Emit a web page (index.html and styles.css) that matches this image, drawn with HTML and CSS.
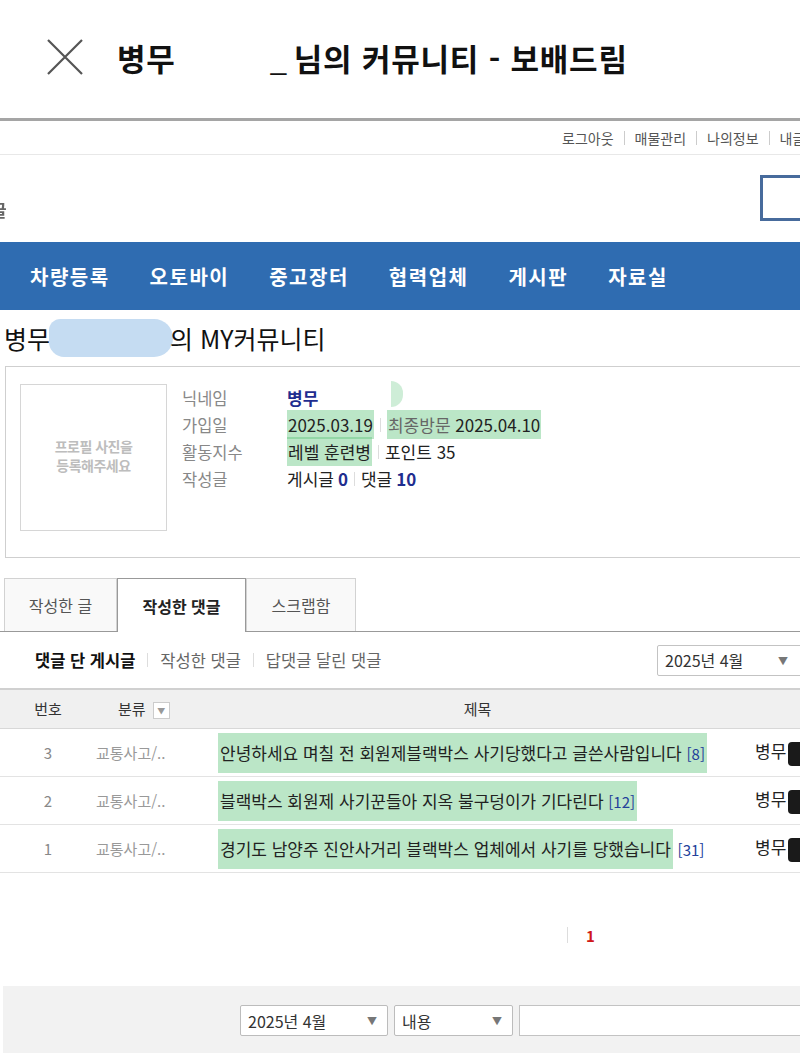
FILE: index.html
```html
<!DOCTYPE html>
<html lang="ko">
<head>
    <meta charset="UTF-8">
    <meta name="viewport" content="width=device-width, initial-scale=1.0">
    <title>병무님의 커뮤니티 - 보배드림</title>
    <link rel="stylesheet" href="styles.css">
</head>
<body>
    <!-- 앱 상단바 -->
    <header class="appbar">
        <svg class="close-icon" width="38" height="38" viewBox="0 0 38 38">
            <path d="M2 2 L36 36 M36 2 L2 36" stroke="#555" stroke-width="2.2" fill="none"/>
        </svg>
        <div class="appbar-title">
            <span>병무</span><span class="hidden-name"></span><span class="dash">_</span><span>님의 커뮤니티 - 보배드림</span>
        </div>
    </header>

    <div class="page">
        <!-- 상단 링크 -->
        <div class="toplinks">
            <a href="#">로그아웃</a>
            <a href="#">매물관리</a>
            <a href="#">나의정보</a>
            <a href="#">내글</a>
        </div>

        <div class="logo-row">
            <span class="cut-glyph">글</span>
            <div class="search-box"></div>
        </div>

        <!-- 메뉴 -->
        <nav class="gnb">
            <a href="#">차량등록</a>
            <a href="#">오토바이</a>
            <a href="#">중고장터</a>
            <a href="#">협력업체</a>
            <a href="#">게시판</a>
            <a href="#">자료실</a>
        </nav>

        <h2 class="my-title">병무<span class="blur-name"></span>의 MY커뮤니티</h2>

        <!-- 프로필 -->
        <section class="profile">
            <div class="photo">프로필 사진을<br>등록해주세요</div>
            <dl class="info">
                <dt>닉네임</dt>
                <dd><b class="nick">병무</b><span class="half-mark"></span></dd>
                <dt>가입일</dt>
                <dd><span class="mark">2025.03.19</span><i class="sep"></i><span class="mark"><span class="muted">최종방문</span> 2025.04.10</span></dd>
                <dt>활동지수</dt>
                <dd><span class="mark">레벨 훈련병</span><i class="sep"></i>포인트 35</dd>
                <dt>작성글</dt>
                <dd>게시글 <b class="num">0</b><i class="sep"></i>댓글 <b class="num">10</b></dd>
            </dl>
        </section>

        <!-- 탭 -->
        <div class="tabs">
            <a href="#" class="tab">작성한 글</a>
            <a href="#" class="tab active">작성한 댓글</a>
            <a href="#" class="tab">스크랩함</a>
        </div>

        <div class="subtabs">
            <div class="sub-links">
                <a href="#" class="on">댓글 단 게시글</a>
                <a href="#">작성한 댓글</a>
                <a href="#">답댓글 달린 댓글</a>
            </div>
            <div class="select month-select">2025년 4월<span class="arrow">▼</span></div>
        </div>

        <!-- 목록 -->
        <table class="list">
            <thead>
                <tr>
                    <th class="c-num">번호</th>
                    <th class="c-cat">분류 <span class="mini-select">▼</span></th>
                    <th class="c-title">제목</th>
                    <th class="c-writer"></th>
                </tr>
            </thead>
            <tbody>
                <tr>
                    <td class="c-num">3</td>
                    <td class="c-cat">교통사고/..</td>
                    <td class="c-title"><span class="mark row-mark">안녕하세요 며칠 전 회원제블랙박스 사기당했다고 글쓴사람입니다 <em>[8]</em></span></td>
                    <td class="c-writer">병무<span class="blot"></span></td>
                </tr>
                <tr>
                    <td class="c-num">2</td>
                    <td class="c-cat">교통사고/..</td>
                    <td class="c-title"><span class="mark row-mark">블랙박스 회원제 사기꾼들아 지옥 불구덩이가 기다린다 <em>[12]</em></span></td>
                    <td class="c-writer">병무<span class="blot"></span></td>
                </tr>
                <tr>
                    <td class="c-num">1</td>
                    <td class="c-cat">교통사고/..</td>
                    <td class="c-title"><span class="mark row-mark">경기도 남양주 진안사거리 블랙박스 업체에서 사기를 당했습니다</span> <em>[31]</em></td>
                    <td class="c-writer">병무<span class="blot"></span></td>
                </tr>
            </tbody>
        </table>

        <div class="paging"><i class="sep"></i><b>1</b></div>

        <!-- 검색 -->
        <div class="search-bar">
            <div class="select month-select small">2025년 4월<span class="arrow">▼</span></div>
            <div class="select type-select">내용<span class="arrow">▼</span></div>
            <div class="search-input"></div>
        </div>
    </div>
</body>
</html>
```

FILE: styles.css
```css
* {
    margin: 0;
    padding: 0;
    box-sizing: border-box;
}

body {
    width: 800px;
    height: 1053px;
    overflow: hidden;
    background: #fff;
    font-family: "Noto Sans CJK KR", "Noto Sans", sans-serif;
    color: #222;
}

a {
    color: inherit;
    text-decoration: none;
}

/* 앱 상단바 */
.appbar {
    height: 121px;
    display: flex;
    align-items: center;
    padding-left: 46px;
    padding-bottom: 4px;
    border-bottom: 3px solid #a5a5a5;
}

.close-icon {
    margin-right: 33px;
}

.appbar-title {
    display: flex;
    align-items: baseline;
    font-size: 31px;
    font-weight: bold;
    color: #111;
    letter-spacing: 0.8px;
}

.hidden-name {
    display: inline-block;
    width: 94px;
}

.dash {
    font-weight: normal;
    margin-right: 6px;
}

/* 페이지 */
.page {
    width: 830px;
}

.toplinks {
    display: flex;
    align-items: center;
    height: 34px;
    padding-left: 552px;
    border-bottom: 1px solid #e8e8e8;
    font-size: 14px;
    color: #555;
    white-space: nowrap;
}

.toplinks a {
    padding: 0 10px;
    line-height: 14px;
    border-left: 1px solid #ccc;
}

.toplinks a:first-child {
    border-left: none;
}

.logo-row {
    height: 87px;
    display: flex;
    align-items: center;
    justify-content: space-between;
}

.cut-glyph {
    margin-left: -9px;
    margin-top: 22px;
    font-size: 17px;
    font-weight: bold;
    color: #666;
    filter: blur(0.6px);
}

.search-box {
    width: 70px;
    height: 46px;
    border: 3px solid #476b9c;
    margin-top: -2px;
}

.gnb {
    height: 68px;
    background: #2f6cb1;
    display: flex;
    align-items: center;
    padding-left: 30px;
}

.gnb a {
    color: #fff;
    font-size: 20px;
    font-weight: bold;
    letter-spacing: 1.5px;
    margin-right: 40px;
}

.my-title {
    height: 56px;
    display: flex;
    align-items: center;
    padding-left: 4px;
    font-size: 25px;
    font-weight: normal;
    color: #111;
}

.blur-name {
    display: inline-block;
    width: 124px;
    height: 38px;
    margin: 0 -3px 0 -1px;
    background: #c5dcf2;
    border-radius: 12px 20px 20px 16px;
}

/* 프로필 */
.profile {
    margin-left: 5px;
    height: 192px;
    border: 1px solid #cfcfcf;
    display: flex;
    padding: 17px 0 0 14px;
}

.photo {
    width: 147px;
    height: 147px;
    border: 1px solid #d6d6d6;
    display: flex;
    align-items: center;
    justify-content: center;
    text-align: center;
    font-size: 14px;
    font-weight: bold;
    line-height: 19px;
    color: #bdbdbd;
    letter-spacing: -0.5px;
    padding-bottom: 4px;
}

.info {
    display: grid;
    grid-template-columns: 105px auto;
    grid-auto-rows: 27px;
    padding: 0 0 0 15px;
    font-size: 16px;
    align-items: center;
}

.info dt {
    color: #888;
    font-size: 16.5px;
}

.info dd {
    color: #222;
    display: flex;
    align-items: center;
    font-size: 17px;
}

.nick {
    color: #1f2d8f;
}

.num {
    color: #1f2d8f;
    margin-left: 4px;
}

.muted {
    color: #666;
}

.sep {
    display: inline-block;
    width: 1px;
    height: 14px;
    background: #ddd;
    margin: 0 6px;
}

.mark {
    background: rgba(92, 196, 122, 0.42);
    padding: 2px 1px;
}

.half-mark {
    display: inline-block;
    width: 12px;
    height: 26px;
    margin-left: 73px;
    margin-top: -8px;
    border-radius: 0 13px 13px 0;
    background: rgba(92, 196, 122, 0.3);
}

/* 탭 */
.tabs {
    display: flex;
    margin-top: 20px;
    padding-left: 4px;
    border-bottom: 1px solid #999;
    height: 54px;
}

.tab {
    width: 113px;
    display: flex;
    align-items: center;
    justify-content: center;
    font-size: 16px;
    color: #555;
    background: #f9f9f9;
    border: 1px solid #d2d2d2;
    border-bottom: none;
}

.tab.active {
    width: 129px;
    background: #fff;
    color: #222;
    font-weight: bold;
    border-color: #999;
    margin-bottom: -1px;
    border-left: 1px solid #999;
}

.tab:last-child {
    width: 110px;
}

/* 서브탭 */
.subtabs {
    display: flex;
    align-items: center;
    justify-content: space-between;
    height: 56px;
    padding: 0 0 0 35px;
}

.sub-links {
    display: flex;
    align-items: center;
    font-size: 16.5px;
    color: #666;
}

.sub-links a {
    padding: 0 12px;
    border-left: 1px solid #ddd;
    line-height: 14px;
}

.sub-links a:first-child {
    border-left: none;
    padding-left: 0;
}

.sub-links .on {
    color: #111;
    font-weight: bold;
}

.select {
    display: flex;
    align-items: center;
    justify-content: space-between;
    height: 31px;
    border: 1px solid #c3c3c3;
    border-radius: 2px;
    background: #fff;
    font-size: 16px;
    color: #333;
    padding: 0 10px 0 7px;
}

.arrow {
    font-size: 10px;
    color: #777;
}

.month-select {
    width: 160px;
    margin-right: 13px;
    padding-right: 28px;
}

/* 목록 */
.list {
    width: 830px;
    border-collapse: collapse;
    font-size: 15px;
}

.list th {
    height: 39px;
    background: #f0f0f0;
    border-top: 2px solid #d0d0d0;
    border-bottom: 1px solid #d8d8d8;
    font-weight: normal;
    color: #333;
}

.list td {
    height: 48px;
    border-bottom: 1px solid #e3e3e3;
}

.c-num {
    width: 96px;
    text-align: center;
    color: #777;
}

.list td.c-num {
    color: #888;
}

.c-cat {
    width: 104px;
    text-align: left;
}

.list th.c-cat {
    padding-left: 22px;
}

.list td.c-cat {
    color: #999;
    font-size: 15px;
}

.mini-select {
    display: inline-block;
    width: 17px;
    height: 17px;
    border: 1px solid #ccc;
    background: #fff;
    font-size: 8px;
    color: #999;
    text-align: center;
    line-height: 15px;
    vertical-align: middle;
    margin-left: 3px;
}

.c-title {
    text-align: center;
}

.list td.c-title {
    text-align: left;
    padding-left: 18px;
    color: #222;
    font-size: 17px;
    white-space: nowrap;
}

.row-mark {
    padding: 7px 2px 8px 2px;
}

.c-title em {
    font-style: normal;
    color: #23409a;
    font-size: 15px;
}

.c-writer {
    width: 75px;
    text-align: left;
}

.list td.c-writer {
    font-size: 17px;
    color: #222;
    white-space: nowrap;
}

.blot {
    display: inline-block;
    width: 14px;
    height: 24px;
    background: #1a1a1a;
    border-radius: 4px 0 0 4px;
    vertical-align: middle;
    margin-left: 2px;
}

.paging {
    height: 113px;
    display: flex;
    align-items: center;
    justify-content: center;
    padding-left: 326px;
    padding-top: 12px;
}

.paging b {
    color: #d01818;
    font-size: 15px;
    margin-left: 12px;
}

.paging .sep {
    height: 16px;
}

/* 하단 검색 */
.search-bar {
    margin-left: 3px;
    height: 70px;
    background: #f2f2f2;
    display: flex;
    align-items: center;
    padding-left: 237px;
    gap: 6px;
}

.search-bar .select {
    border-color: #bcbcbc;
}

.month-select.small {
    width: 148px;
    margin: 0;
    padding-right: 10px;
}

.type-select {
    width: 119px;
}

.search-input {
    width: 300px;
    height: 31px;
    background: #fff;
    border: 1px solid #c3c3c3;
}
```
